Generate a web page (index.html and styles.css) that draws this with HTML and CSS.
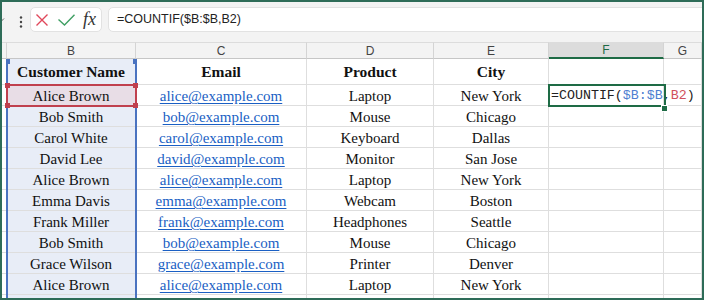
FILE: index.html
```html
<!DOCTYPE html>
<html>
<head>
<meta charset="utf-8">
<link rel="stylesheet" href="styles.css">
</head>
<body>
<div class="frame">
  <div class="fbar">
    <svg class="chev" width="6" height="6" viewBox="0 0 6 6"><path d="M0 1.5 L2.5 4 L5 1.5" fill="none" stroke="#666" stroke-width="1"/></svg>
    <svg class="dots" width="4" height="12" viewBox="0 0 4 12"><circle cx="2" cy="1.5" r="1.2" fill="#444"/><circle cx="2" cy="6" r="1.2" fill="#444"/><circle cx="2" cy="10.5" r="1.2" fill="#444"/></svg>
    <div class="btnbox">
      <svg class="ico" width="12" height="12" viewBox="0 0 12 12"><path d="M0.5 0.5 L11.5 11.5 M11.5 0.5 L0.5 11.5" stroke="#e0475a" stroke-width="1.4" fill="none"/></svg>
      <svg class="ico chk" width="17" height="12" viewBox="0 0 17 12"><path d="M0.5 5.5 L6.5 11 L16.5 0.8" stroke="#3f9f63" stroke-width="1.4" fill="none"/></svg>
      <span class="fx">fx</span>
    </div>
    <div class="fbox">=COUNTIF($B:$B,B2)</div>
  </div>
  <div class="grid">
    <div class="hc"></div><div class="hc">B</div><div class="hc">C</div><div class="hc">D</div><div class="hc">E</div><div class="hc hsel">F</div><div class="hc">G</div>

    <div class="c"></div><div class="c b colb">Customer Name</div><div class="c b">Email</div><div class="c b">Product</div><div class="c b">City</div><div class="c"></div><div class="c"></div>

    <div class="c"></div><div class="c colb b2">Alice Brown</div><div class="c"><span class="ln">alice@example.com</span></div><div class="c">Laptop</div><div class="c">New York</div><div class="c fcell">=COUNTIF(<span class="rb">$B:$B</span>,<span class="rr">B2</span>)</div><div class="c"></div>

    <div class="c"></div><div class="c colb">Bob Smith</div><div class="c"><span class="ln">bob@example.com</span></div><div class="c">Mouse</div><div class="c">Chicago</div><div class="c"></div><div class="c"></div>

    <div class="c"></div><div class="c colb">Carol White</div><div class="c"><span class="ln">carol@example.com</span></div><div class="c">Keyboard</div><div class="c">Dallas</div><div class="c"></div><div class="c"></div>

    <div class="c"></div><div class="c colb">David Lee</div><div class="c"><span class="ln">david@example.com</span></div><div class="c">Monitor</div><div class="c">San Jose</div><div class="c"></div><div class="c"></div>

    <div class="c"></div><div class="c colb">Alice Brown</div><div class="c"><span class="ln">alice@example.com</span></div><div class="c">Laptop</div><div class="c">New York</div><div class="c"></div><div class="c"></div>

    <div class="c"></div><div class="c colb">Emma Davis</div><div class="c"><span class="ln">emma@example.com</span></div><div class="c">Webcam</div><div class="c">Boston</div><div class="c"></div><div class="c"></div>

    <div class="c"></div><div class="c colb">Frank Miller</div><div class="c"><span class="ln">frank@example.com</span></div><div class="c">Headphones</div><div class="c">Seattle</div><div class="c"></div><div class="c"></div>

    <div class="c"></div><div class="c colb">Bob Smith</div><div class="c"><span class="ln">bob@example.com</span></div><div class="c">Mouse</div><div class="c">Chicago</div><div class="c"></div><div class="c"></div>

    <div class="c"></div><div class="c colb">Grace Wilson</div><div class="c"><span class="ln">grace@example.com</span></div><div class="c">Printer</div><div class="c">Denver</div><div class="c"></div><div class="c"></div>

    <div class="c"></div><div class="c colb">Alice Brown</div><div class="c"><span class="ln">alice@example.com</span></div><div class="c">Laptop</div><div class="c">New York</div><div class="c"></div><div class="c"></div>

    <div class="c"></div><div class="c colb"></div><div class="c"></div><div class="c"></div><div class="c"></div><div class="c"></div><div class="c"></div>

    <div class="bluesel"></div>
    <div class="sq bsq bsq-l"></div>
    <div class="sq bsq bsq-r"></div>
    <div class="redsel"></div>
    <div class="sq rsq rsq-tl"></div>
    <div class="sq rsq rsq-tr"></div>
    <div class="sq rsq rsq-bl"></div>
    <div class="sq rsq rsq-br"></div>
    <div class="active"></div>
    <div class="handle"></div>
  </div>
</div>
</body>
</html>
```
FILE: styles.css
```css
* { box-sizing: border-box; }
html, body { margin: 0; padding: 0; background: #fff; }
.frame {
  width: 704px;
  height: 300px;
  border: 2px solid #2e6c58;
  overflow: hidden;
  background: #fff;
}
.fbar {
  height: 40px;
  background: #f3f3f3;
  display: flex;
  align-items: flex-start;
  padding-top: 5px;
}
.chev { margin-top: 10px; margin-left: -3px; flex: none; }
.dots { margin-top: 9px; margin-left: 14px; flex: none; }
.btnbox {
  flex: none;
  margin-left: 7px;
  width: 72px;
  height: 25px;
  background: #fff;
  border: 1px solid #e2e2e2;
  border-radius: 5px;
  display: flex;
  align-items: center;
  padding-left: 5px;
}
.ico { flex: none; }
.chk { margin-left: 10px; }
.fx {
  margin-left: 8px;
  font-family: "Liberation Serif", serif;
  font-style: italic;
  font-size: 18px;
  color: #333;
  line-height: 1;
  margin-top: -2px;
}
.fbox {
  flex: 1;
  margin-left: 6px;
  margin-right: -10px;
  height: 25px;
  background: #fff;
  border: 1px solid #e2e2e2;
  border-radius: 5px;
  font-family: "Liberation Sans", Arial, sans-serif;
  font-size: 12.5px;
  color: #222;
  padding-left: 8px;
  line-height: 23px;
}
.grid {
  position: relative;
  display: grid;
  grid-template-columns: 5px 129px 171px 127px 115px 115px 1fr;
  grid-template-rows: 17px 26px repeat(10, 21px) 21px;
}
.hc {
  background: #f3f3f3;
  border-top: 1px solid #dcdcdc;
  border-right: 1px solid #d4d4d4;
  border-bottom: 1px solid #c6c6c6;
  font-family: "Liberation Sans", Arial, sans-serif;
  font-size: 12px;
  color: #444;
  display: flex;
  align-items: center;
  justify-content: center;
}
.hc.hsel {
  background: #dcdcdc;
  color: #1e6b45;
  border-bottom: 2px solid #1e6b45;
}
.c {
  border-right: 1px solid #dedede;
  border-bottom: 1px solid #dedede;
  font-family: "Liberation Serif", "Times New Roman", serif;
  font-size: 15px;
  color: #111;
  display: flex;
  align-items: center;
  justify-content: center;
  white-space: nowrap;
  padding-top: 3px;
  line-height: 1;
}
.c.b { font-weight: bold; font-size: 15.5px; padding-top: 1px; }
.colb { background: #e8edf7; }
.colb.b2 { background: #e8dde6; }
.ln { color: #1a5fc4; text-decoration: underline; text-underline-offset: 2px; }
.fcell {
  justify-content: flex-start;
  padding-left: 2px;
  padding-top: 2px;
  font-family: "Liberation Mono", "Courier New", monospace;
  font-size: 13.3px;
  color: #222;
  overflow: visible;
}
.rb { color: #4f7fd1; }
.rr { color: #d0505c; }
.bluesel {
  position: absolute;
  left: 4px;
  top: 17px;
  bottom: 0;
  width: 131px;
  border-left: 2px solid #4a73c0;
  border-right: 2px solid #4a73c0;
}
.sq { position: absolute; }
.bsq { width: 4px; height: 5px; background: #4a73c0; top: 17px; }
.bsq-l { left: 4px; }
.bsq-r { left: 131px; }
.redsel {
  position: absolute;
  left: 4px;
  top: 42px;
  width: 131px;
  height: 23px;
  border: 2px solid #c0404e;
}
.rsq { width: 5px; height: 5px; background: #c0404e; }
.rsq-tl { left: 3px; top: 41px; }
.rsq-tr { left: 131px; top: 41px; }
.rsq-bl { left: 3px; top: 61px; }
.rsq-br { left: 131px; top: 61px; }
.active {
  position: absolute;
  left: 546px;
  top: 42px;
  width: 118px;
  height: 23px;
  border: 2px solid #1e6b45;
}
.handle {
  position: absolute;
  left: 659px;
  top: 63px;
  width: 5px;
  height: 5px;
  background: #1e6b45;
  border: 1px solid #fff;
  box-sizing: content-box;
}
```
